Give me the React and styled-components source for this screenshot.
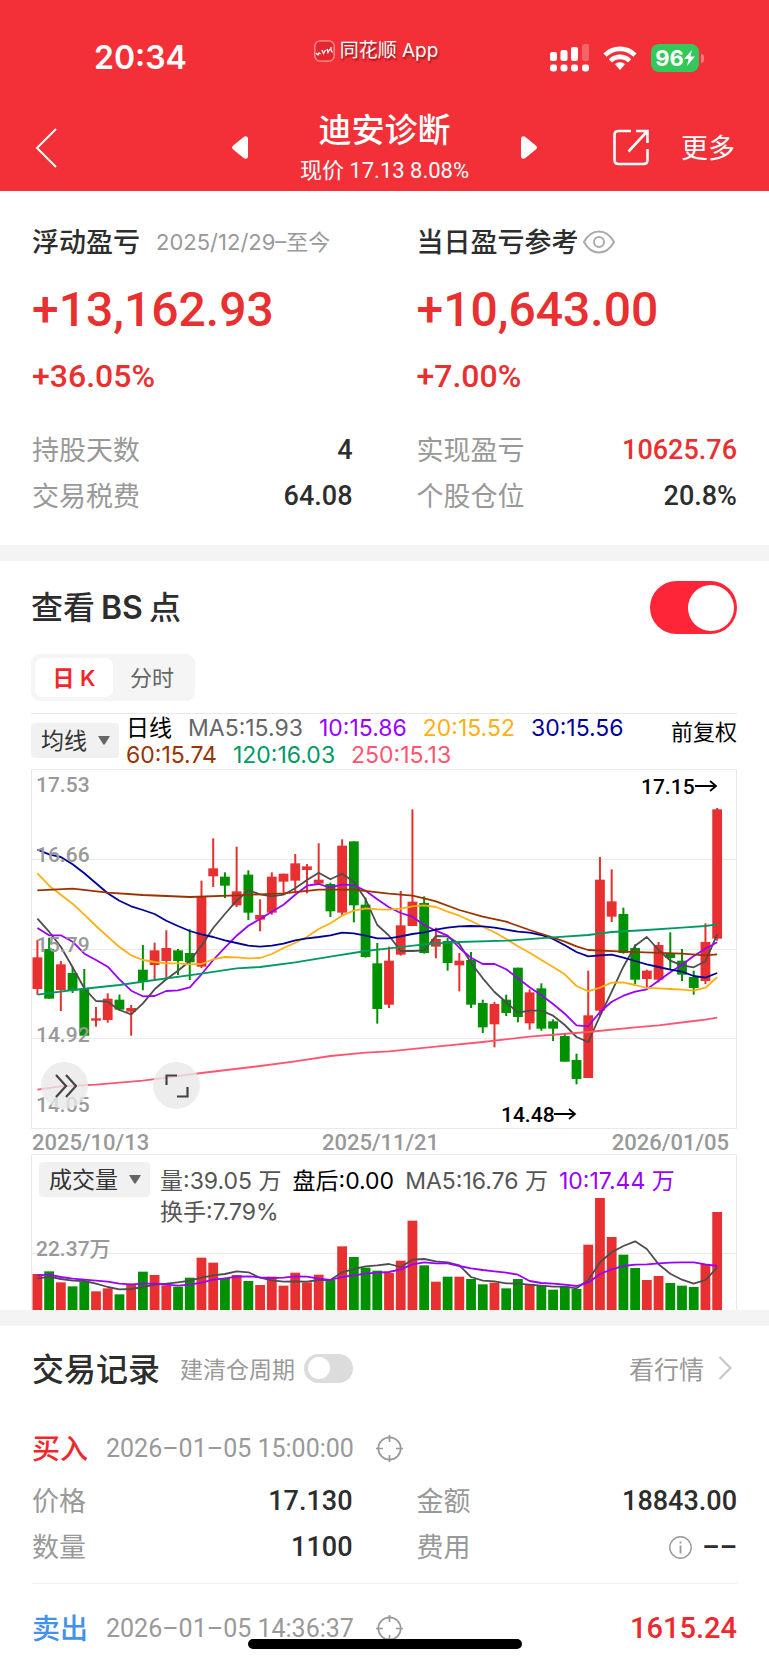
import React, { useState } from "react";
import styled, { createGlobalStyle, css } from "styled-components";

const GlobalStyle = createGlobalStyle`
  *, *::before, *::after { box-sizing: border-box; }
  body {
    margin: 0;
    background: #fff;
    color: #2d2d2d;
    font-family: Inter, "Noto Sans CJK SC", sans-serif;
    -webkit-font-smoothing: antialiased;
  }
  button, select, input { font: inherit; color: inherit; margin: 0; }
  h1, h2, p, dl, dd, dt { margin: 0; font-weight: inherit; font-size: inherit; }
  svg { display: block; flex: none; }
`;

const RED = "#e93030";
const GREEN = "#009100";
const GRAY = "#999";
const digits = css`
  font-family: Roboto, "Noto Sans CJK SC", sans-serif;
`;

const Page = styled.main`
  position: relative;
  min-height: 100vh;
  overflow: hidden;
`;

/* ---------- header ---------- */
const Header = styled.header`
  background: #f33038;
  color: #fff;
`;
const StatusBar = styled.div`
  display: grid;
  grid-template-columns: 1fr auto 1fr;
  align-items: center;
  height: 112px;
  padding: 4px 65px 0 48px;
`;
const Clock = styled.span`
  padding-left: 46px;
  font-size: 32px;
  line-height: 40px;
  font-weight: 600;
`;
const Brand = styled.span`
  display: flex;
  align-items: center;
  gap: 5px;
  padding-bottom: 14px;
  font-size: 19px;
  line-height: 24px;
  text-shadow: 1px 2px 2px rgba(80, 0, 0, 0.6);
`;
const StatusIcons = styled.span`
  display: flex;
  align-items: center;
  justify-content: flex-end;
  gap: 14px;
`;
const Battery = styled.span`
  display: flex;
  align-items: center;
  gap: 2px;
`;
const BatteryBody = styled.span`
  display: flex;
  align-items: center;
  justify-content: center;
  width: 48px;
  height: 28px;
  border-radius: 8px;
  background: #34c759;
  font-size: 22px;
  font-weight: 700;
`;
const BatteryTip = styled.span`
  width: 3px;
  height: 9px;
  border-radius: 0 3px 3px 0;
  background: #f8777c;
`;
const NavBar = styled.nav`
  display: grid;
  grid-template-columns: 1fr auto 1fr;
  align-items: center;
  height: 79px;
  padding: 0 34px 8px;
`;
const IconButton = styled.button`
  display: flex;
  align-items: center;
  padding: 0;
  border: 0;
  background: none;
`;
const StockSwitcher = styled.div`
  display: grid;
  grid-template-columns: 16px 273px 16px;
  align-items: center;
`;
const StockTitle = styled.div`
  height: 70px;
  text-align: center;
`;
const StockName = styled.h1`
  font-size: 33px;
  line-height: 34px;
  font-weight: 500;
`;
const StockPrice = styled.p`
  ${digits}
  margin-top: 7px;
  font-size: 22px;
  line-height: 34px;
`;
const NavActions = styled.div`
  display: flex;
  align-items: center;
  justify-content: flex-end;
  gap: 32px;
`;
const MoreButton = styled(IconButton)`
  padding-top: 2px;
  font-size: 27px;
  line-height: 32px;
`;

/* ---------- profit summary ---------- */
const Columns = styled.div`
  display: grid;
  grid-template-columns: 1fr 1fr;
  column-gap: 64px;
`;
const Summary = styled(Columns).attrs({ as: "section" })`
  padding: 31px 32px 27px;
`;
const SummaryHead = styled.div`
  display: flex;
  align-items: center;
  height: 40px;
`;
const SummaryTitle = styled.h2`
  padding-bottom: 4px;
  font-size: 27px;
  font-weight: 500;
`;
const Period = styled.span`
  margin-left: 16px;
  padding-bottom: 4px;
  font-size: 22px;
  color: ${GRAY};
`;
const EyeButton = styled(IconButton)`
  margin-left: 4px;
  color: #aaa;
`;
const Amount = styled.p`
  ${digits}
  margin-top: 18px;
  font-size: 48px;
  line-height: 60px;
  font-weight: 500;
  color: ${RED};
`;
const Percent = styled(Amount)`
  margin: 15px 0 29px;
  font-size: 32px;
  line-height: 42px;
`;
const Row = styled.dl`
  display: flex;
  align-items: center;
  justify-content: space-between;
  height: 46px;
  font-size: 27px;
`;
const RowLabel = styled.dt`
  padding-bottom: 2px;
  color: ${GRAY};
`;
const RowValue = styled.dd`
  ${digits}
  display: flex;
  align-items: center;
  gap: 10px;
  padding-top: 2px;
  font-weight: 500;
  color: ${(p) => (p.$tone === "up" ? RED : "#2d2d2d")};
`;
const Band = styled.div`
  height: 16px;
  background: #f4f4f4;
`;

/* ---------- chart section ---------- */
const ChartSection = styled.section`
  padding: 20px 32px 0 31px;
`;
const SectionHead = styled.div`
  display: flex;
  align-items: center;
  justify-content: space-between;
`;
const SectionTitle = styled.label`
  font-size: 32px;
  line-height: 44px;
  font-weight: 500;
`;
const Latin = styled.span`
  margin: 0 6px;
  font-weight: 600;
`;
const Switch = styled.input.attrs({ type: "checkbox", role: "switch" })`
  appearance: none;
  flex: none;
  display: flex;
  align-items: center;
  width: ${(p) => (p.$small ? 49 : 87)}px;
  height: ${(p) => (p.$small ? 29 : 53)}px;
  padding: 0 ${(p) => (p.$small ? 4 : 3)}px;
  border-radius: 27px;
  background: #dcdcdc;
  &::before {
    content: "";
    width: ${(p) => (p.$small ? 22 : 46)}px;
    height: ${(p) => (p.$small ? 22 : 46)}px;
    border-radius: 50%;
    background: #fff;
  }
  &:checked {
    justify-content: flex-end;
    background: #ff2538;
  }
`;
const Tabs = styled.div`
  display: inline-flex;
  margin: 20px 0 12px;
  padding: 4px;
  border-radius: 9px;
  background: #f5f5f5;
`;
const Tab = styled.button`
  width: 78px;
  height: 39px;
  padding: 0 0 4px;
  border: 0;
  border-radius: 7px;
  font-size: 22px;
  background: ${(p) => (p.$active ? "#fff" : "none")};
  color: ${(p) => (p.$active ? "#f0282d" : "#666")};
  font-weight: ${(p) => (p.$active ? 600 : 400)};
`;
const Legend = styled.div`
  display: flex;
  align-items: flex-start;
  gap: 7px;
  height: 56px;
  border-top: 1px solid #e8e8e8;
`;
const Picker = styled.div`
  position: relative;
  flex: none;
  margin-top: ${(p) => (p.$flush ? 0 : 9)}px;
  svg {
    position: absolute;
    right: 9px;
    top: 13px;
    pointer-events: none;
  }
`;
const PickerSelect = styled.select`
  appearance: none;
  display: block;
  width: ${(p) => p.$width}px;
  height: 35px;
  padding: 0 0 0 10px;
  border: 0;
  border-radius: 4px;
  background: #f1f1f1;
  font-size: 23px;
  color: #333;
`;
const LegendItems = styled.div`
  display: flex;
  flex: 1;
  flex-wrap: wrap;
  column-gap: ${(p) => (p.$roomy ? 11 : 16)}px;
  padding-top: ${(p) => (p.$roomy ? 4 : 1)}px;
  font-size: 23px;
  line-height: ${(p) => (p.$roomy ? 31 : 27)}px;
`;
const LegendItem = styled.span`
  color: ${(p) => p.$color};
  white-space: nowrap;
`;
const Adjust = styled(IconButton)`
  flex: none;
  margin-top: 5px;
  font-size: 22px;
  line-height: 27px;
  color: #000;
`;
const ChartBox = styled.div`
  position: relative;
`;
const Plot = styled.svg`
  width: 100%;
  height: auto;
`;
const AxisText = styled.text`
  ${digits}
  font-size: 21px;
  fill: ${(p) => (p.$strong ? "#000" : GRAY)};
  font-weight: 500;
`;
const FloatButtons = styled.div`
  position: absolute;
  left: 10px;
  bottom: 20px;
  display: flex;
  gap: 65px;
`;
const RoundButton = styled.button`
  display: flex;
  align-items: center;
  justify-content: center;
  width: 47px;
  height: 47px;
  padding: 0;
  border: 0;
  border-radius: 50%;
  background: rgba(232, 232, 232, 0.8);
  color: #444;
`;
const Dates = styled.div`
  ${digits}
  display: flex;
  justify-content: space-between;
  padding: 3px 8px 0 1px;
  font-size: 22px;
  line-height: 22px;
  color: ${GRAY};
  font-weight: 500;
`;
const VolumeLegend = styled.div`
  position: absolute;
  inset: 8px 8px auto;
  display: flex;
  align-items: flex-start;
  gap: 10px;
`;

/* ---------- trade records ---------- */
const Records = styled.section`
  padding: 20px 32px 0;
`;
const RecordsHead = styled.div`
  display: flex;
  align-items: center;
  height: 44px;
  margin-bottom: 14px;
`;
const RecordsTitle = styled.h2`
  padding-bottom: 2px;
  font-size: 32px;
  font-weight: 500;
`;
const CycleLabel = styled.label`
  display: flex;
  align-items: center;
  gap: 9px;
  margin-left: 20px;
  font-size: 23px;
  color: ${GRAY};
`;
const QuoteLink = styled.a`
  display: flex;
  align-items: center;
  gap: 14px;
  margin-left: auto;
  padding-right: 5px;
  font-size: 25px;
  color: ${GRAY};
  text-decoration: none;
`;
const Record = styled.article`
  padding: 24px 0 14px;
  & + & {
    border-top: 1px solid #f0f0f0;
  }
`;
const RecordHead = styled.div`
  display: flex;
  align-items: center;
  height: 40px;
`;
const Side = styled.span`
  padding-bottom: 2px;
  font-size: 28px;
  font-weight: 500;
  color: ${(p) => (p.$side === "buy" ? "#f0282d" : "#4390ef")};
`;
const RecordTime = styled.time`
  ${digits}
  margin: 0 22px 0 18px;
  font-size: 25px;
  color: ${GRAY};
`;
const RecordProfit = styled.span`
  ${digits}
  margin-left: auto;
  font-size: 29px;
  font-weight: 500;
  color: #f0282d;
`;
const RecordRows = styled(Columns)`
  margin-top: 9px;
`;
const HomeIndicator = styled.div`
  position: absolute;
  left: 50%;
  bottom: 16px;
  width: 274px;
  height: 10px;
  margin-left: -137px;
  border-radius: 5px;
  background: #000;
`;

/* ---------- chart data ---------- */
// Each candle: direction, body top, body bottom, high, low (thirds of a plot unit).
const CANDLES = [
  ["R", 562, 657, 510, 674], ["G", 537, 686, 503, 686], ["R", 583, 660, 573, 723],
  ["G", 609, 662, 592, 669], ["G", 656, 797, 597, 797], ["R", 745, 752, 711, 770],
  ["R", 686, 750, 670, 758], ["G", 689, 719, 674, 722], ["R", 714, 725, 705, 797],
  ["G", 599, 636, 525, 661], ["R", 541, 585, 518, 630], ["R", 534, 573, 481, 624],
  ["G", 541, 573, 537, 615], ["G", 549, 577, 478, 630], ["R", 380, 590, 332, 594],
  ["R", 295, 319, 205, 351], ["G", 320, 347, 307, 384], ["R", 364, 406, 230, 411],
  ["G", 314, 428, 301, 450], ["R", 435, 449, 388, 484], ["R", 320, 428, 307, 434],
  ["R", 311, 335, 311, 368], ["R", 280, 332, 252, 368], ["R", 289, 300, 282, 370],
  ["R", 329, 341, 220, 342], ["G", 342, 424, 338, 441], ["R", 227, 428, 208, 436],
  ["G", 214, 406, 214, 457], ["G", 404, 561, 383, 563], ["G", 580, 717, 519, 761],
  ["R", 572, 704, 530, 714], ["R", 466, 554, 363, 557], ["R", 395, 468, 118, 468],
  ["G", 399, 549, 379, 551], ["R", 507, 530, 473, 565], ["G", 513, 579, 503, 602],
  ["R", 572, 586, 549, 664], ["G", 570, 704, 546, 714], ["G", 699, 772, 689, 789],
  ["R", 702, 763, 696, 832], ["G", 689, 729, 674, 738], ["G", 593, 741, 593, 757],
  ["R", 667, 760, 658, 779], ["G", 655, 776, 640, 782], ["G", 754, 776, 748, 813],
  ["G", 798, 875, 790, 875], ["G", 870, 927, 851, 943], ["R", 736, 924, 602, 924],
  ["R", 329, 722, 261, 739], ["R", 394, 440, 298, 456], ["G", 432, 549, 413, 551],
  ["G", 534, 629, 523, 643], ["R", 602, 627, 599, 657], ["R", 525, 629, 516, 637],
  ["G", 549, 564, 487, 600], ["G", 572, 614, 537, 633], ["G", 621, 654, 602, 674],
  ["R", 516, 633, 460, 642], ["R", 118, 506, 114, 512],
];
const VOLUMES = [
  432, 424, 457, 469, 455, 484, 475, 493, 463, 425, 435, 466, 470, 443, 383, 398, 444, 435, 453, 465,
  440, 467, 428, 457, 434, 450, 349, 381, 413, 422, 429, 392, 272, 406, 455, 440, 440, 447, 463, 458,
  475, 447, 463, 467, 479, 470, 477, 344, 204, 321, 374, 414, 450, 438, 459, 467, 471, 402, 246,
];
const daily = (values) => values.map((v, i) => [i, v]);
const PRICE_LINES = [
  { color: "#4d4d4d", points: daily([446, 485, 530, 592, 655, 693, 695, 720, 733, 700, 658, 628, 602, 573, 527, 474, 432, 392, 361, 373, 379, 374, 355, 330, 308, 328, 311, 335, 388, 465, 497, 543, 543, 541, 498, 499, 522, 578, 625, 666, 697, 728, 722, 722, 737, 765, 801, 816, 738, 665, 590, 527, 501, 540, 572, 586, 592, 574, 493]) },
  { color: "#9900ff", points: daily([474, 496, 496, 515, 551, 570, 590, 628, 662, 679, 678, 663, 661, 652, 613, 570, 533, 497, 467, 447, 425, 404, 374, 347, 342, 353, 343, 346, 362, 388, 412, 429, 440, 465, 482, 497, 533, 563, 582, 582, 598, 625, 652, 676, 702, 731, 766, 769, 726, 695, 677, 665, 658, 632, 607, 584, 558, 536, 517]) },
  { color: "#ffb011", points: daily([310, 347, 374, 401, 434, 468, 500, 531, 556, 570, 576, 580, 580, 583, 582, 568, 561, 562, 565, 564, 552, 534, 518, 500, 477, 460, 437, 422, 415, 418, 419, 416, 409, 406, 411, 425, 437, 453, 470, 487, 507, 529, 548, 570, 591, 613, 648, 664, 653, 638, 637, 645, 654, 655, 657, 659, 662, 653, 622]) },
  { color: "#000099", points: daily([239, 253, 261, 283, 310, 340, 370, 392, 409, 420, 432, 452, 468, 483, 493, 501, 511, 519, 527, 530, 527, 521, 511, 505, 501, 496, 488, 490, 497, 505, 505, 499, 492, 487, 479, 473, 469, 468, 469, 473, 479, 485, 488, 495, 507, 526, 546, 559, 556, 554, 563, 573, 583, 591, 599, 605, 618, 623, 609]) },
  { color: "#993300", points: [[0, 361], [3, 356], [6, 368], [9, 375], [13, 381], [17, 376], [21, 370], [24, 359], [27, 359], [30, 371], [32, 377], [33, 385], [34, 394], [36, 420], [38, 440], [40, 455], [42, 480], [44, 503], [45, 515], [46, 529], [47, 540], [50, 545], [55, 551], [57, 556], [58, 553]] },
  { color: "#009966", points: [[0, 674], [3, 660], [7, 645], [10, 630], [14, 611], [17, 595], [19, 591], [22, 577], [25, 560], [28, 543], [30, 535], [33, 523], [36, 516], [40, 512], [44, 502], [47, 495], [49, 486], [52, 480], [55, 473], [57, 468], [58, 463]] },
  { color: "#ff5571", points: [[0, 959], [2, 949], [5, 944], [9, 932], [14, 909], [19, 888], [22, 874], [25, 858], [28, 848], [30, 844], [34, 830], [38, 816], [42, 800], [47, 786], [51, 772], [53, 766], [56, 753], [57, 749], [58, 743]] },
];
const VOLUME_LINES = [
  { color: "#4d4d4d", points: daily([446, 440, 447, 452, 453, 461, 471, 478, 477, 471, 464, 461, 457, 452, 443, 436, 432, 424, 427, 443, 451, 455, 454, 455, 450, 450, 427, 417, 409, 406, 402, 411, 389, 387, 394, 397, 406, 441, 452, 454, 460, 461, 464, 467, 470, 470, 475, 451, 397, 367, 348, 334, 357, 403, 431, 449, 461, 450, 413]) },
  { color: "#9900ff", points: daily([436, 434, 441, 446, 449, 452, 455, 461, 463, 461, 461, 464, 467, 464, 458, 449, 445, 440, 439, 442, 444, 443, 439, 440, 446, 450, 441, 436, 431, 428, 426, 418, 403, 397, 400, 400, 408, 415, 420, 424, 428, 434, 453, 459, 461, 464, 468, 458, 432, 418, 408, 404, 403, 400, 398, 397, 397, 403, 408]) },
];

const STEP = 11.72;
const dayX = (i) => 6.4 + i * STEP;
const priceY = (v) => v / 3 + 1;
const volumeY = (v) => (v - 72) / 3;
const barColor = (dir) => (dir === "R" ? RED : GREEN);

function Lines({ lines, toY }) {
  return lines.map((line) => (
    <polyline
      key={line.color}
      points={line.points.map(([i, v]) => `${dayX(i).toFixed(1)},${toY(v).toFixed(1)}`).join(" ")}
      fill="none"
      stroke={line.color}
      strokeWidth="1.8"
      strokeLinejoin="round"
    />
  ));
}

function Arrow({ x, y }) {
  return <path d={`M${x} ${y}h21M${x + 15} ${y - 5}l6 5l-6 5`} fill="none" stroke="#000" strokeWidth="1.8" />;
}

function PriceChart() {
  return (
    <Plot viewBox="0 0 706 360" role="img" aria-label="日K线图">
      <path d="M.5 .5H705.5V359.5H.5ZM0 90.5H705M0 180.5H705M0 269.5H705" fill="none" stroke="#e9e9e9" />
      {CANDLES.map(([dir, top, bottom, high, low], i) => (
        <g key={i} fill={barColor(dir)}>
          <rect x={dayX(i) - 1} y={priceY(high)} width="2" height={(low - high) / 3} />
          <rect x={dayX(i) - 4.9} y={priceY(top)} width="9.8" height={(bottom - top) / 3} />
        </g>
      ))}
      <Lines lines={PRICE_LINES} toY={priceY} />
      <AxisText x="5" y="23">17.53</AxisText>
      <AxisText x="5" y="93">16.66</AxisText>
      <AxisText x="5" y="183">15.79</AxisText>
      <AxisText x="5" y="273">14.92</AxisText>
      <AxisText x="5" y="343">14.05</AxisText>
      <AxisText x="610" y="25" $strong>17.15</AxisText>
      <Arrow x={664} y={17} />
      <AxisText x="470" y="353" $strong>14.48</AxisText>
      <Arrow x={523} y={345} />
    </Plot>
  );
}

function VolumeChart() {
  return (
    <Plot viewBox="0 0 706 156" role="img" aria-label="成交量图">
      <path d="M.5 156V.5H705.5V156M0 99.5H705" fill="none" stroke="#e9e9e9" />
      {VOLUMES.map((v, i) => (
        <rect key={i} x={dayX(i) - 4.9} y={volumeY(v)} width="9.8" height={156 - volumeY(v)} fill={barColor(CANDLES[i][0])} />
      ))}
      <Lines lines={VOLUME_LINES} toY={volumeY} />
      <AxisText x="5" y="102">22.37万</AxisText>
    </Plot>
  );
}

/* ---------- icons ---------- */
const Signal = () => (
  <svg width="39" height="28" viewBox="0 0 39 28" fill="#fff">
    <rect x="0" y="8" width="7" height="9" rx="2" />
    <rect x="10.5" y="6" width="7" height="11" rx="2" />
    <rect x="21" y="3" width="7" height="14" rx="2" />
    <rect x="32" y="0" width="7" height="17" rx="2" opacity=".25" />
    {[0, 10.5, 21, 32].map((x) => <rect key={x} x={x} y="20.5" width="7" height="7" rx="2.4" />)}
  </svg>
);
const Wifi = () => (
  <svg width="34" height="25" viewBox="0 0 34 25" fill="none" stroke="#fff" strokeWidth="4.6">
    <path d="M2 9.2C10 .8 24 .8 32 9.2M7.4 14.8C12.8 9.6 21.2 9.6 26.6 14.8" />
    <path d="M17 16.2c-2.4 0-4 .9-5 2L17 24l5-5.800c-1-1.100-2.600-2-5-2Z" fill="#fff" stroke="none" />
  </svg>
);
const Bolt = () => (
  <svg width="11" height="16" viewBox="0 0 11 16" fill="#fff"><path d="M8 0 0 9h4.600L3 16l8-9.500H6.400Z" /></svg>
);
const BrandMark = () => (
  <svg width="21" height="22" viewBox="0 0 21 22" fill="none">
    <rect x=".8" y=".8" width="19.400" height="20.400" rx="5.500" fill="#e5262e" stroke="#f79a9e" strokeWidth="1.300" />
    <path d="M2 13l2 2 1-2 1.500 1M8 10l1.500 3.500L11.500 10M13 9l1 3.500L16 9M17 7v3l1.500 2.500" stroke="#fff" strokeWidth="1.300" />
  </svg>
);
const BackIcon = () => (
  <svg width="24" height="40" viewBox="0 0 24 40" fill="none" stroke="#fff" strokeWidth="2"><path d="M22 1 3 20l19 19" /></svg>
);
const TriangleLeft = () => (
  <svg width="16" height="23" viewBox="0 0 16 23" fill="#fff"><path d="M1.200 9.500 11 1.400C13.500-.600 16 0 16 3v17c0 3-2.500 3.600-5 1.600L1.200 13.500c-1.600-1.300-1.600-2.700 0-4Z" /></svg>
);
const TriangleRight = () => (
  <svg width="16" height="23" viewBox="0 0 16 23" fill="#fff"><path d="M14.800 9.500 5 1.400C2.500-.600 0 0 0 3v17c0 3 2.500 3.600 5 1.600l9.800-8.100c1.600-1.300 1.600-2.700 0-4Z" /></svg>
);
const ShareIcon = () => (
  <svg width="36" height="37" viewBox="0 0 36 37" fill="none" stroke="#fff" strokeWidth="2.600">
    <path d="M18 2H5.500Q1.500 2 1.500 6v25q0 4 4 4h25q4 0 4-4V20M23 2h11.500v12M34 2.500 15.500 22.500" />
  </svg>
);
const EyeIcon = () => (
  <svg width="32" height="24" viewBox="0 0 32 24" fill="none" stroke="currentColor" strokeWidth="2">
    <path d="M1 12C5 4.500 10 1.500 16 1.500S27 4.500 31 12c-4 7.500-9 10.500-15 10.500S5 19.500 1 12Z" />
    <circle cx="16" cy="12" r="5" />
  </svg>
);
const Caret = () => (
  <svg width="12" height="9" viewBox="0 0 12 9" fill="#666"><path d="M0 0h12L6.800 8.300Q6 9.200 5.200 8.300Z" /></svg>
);
const DoubleChevron = () => (
  <svg width="24" height="24" viewBox="0 0 24 24" fill="none" stroke="currentColor" strokeWidth="2.200"><path d="M3 1l10 11L3 23M13 1l10 11-10 11" /></svg>
);
const ExpandIcon = () => (
  <svg width="24" height="24" viewBox="0 0 24 24" fill="none" stroke="currentColor" strokeWidth="2.200"><path d="M1.500 11V1.500H12M22.500 13v9.500H12" /></svg>
);
const ChevronRight = () => (
  <svg width="14" height="24" viewBox="0 0 14 24" fill="none" stroke="#c4c4c4" strokeWidth="2"><path d="M1.500 1 12.500 12l-11 11" /></svg>
);
const TargetIcon = () => (
  <svg width="27" height="27" viewBox="0 0 27 27" fill="none" stroke={GRAY} strokeWidth="1.700">
    <circle cx="13.500" cy="13.500" r="11.200" />
    <path d="M13.500 0v7M13.500 20v7M0 13.500h7M20 13.500h7" />
  </svg>
);
const InfoIcon = () => (
  <svg width="23" height="23" viewBox="0 0 23 23" fill="none" stroke={GRAY} strokeWidth="1.400">
    <circle cx="11.500" cy="11.500" r="10.700" />
    <path d="M11.500 9.500v8M11.500 5.500v2" strokeWidth="1.800" />
  </svg>
);

/* ---------- composed pieces ---------- */
function Stat({ label, children, tone }) {
  return (
    <Row>
      <RowLabel>{label}</RowLabel>
      <RowValue $tone={tone}>{children}</RowValue>
    </Row>
  );
}

function LegendList({ items, roomy }) {
  return (
    <LegendItems $roomy={roomy}>
      {items.map(([text, color]) => <LegendItem key={text} $color={color}>{text}</LegendItem>)}
    </LegendItems>
  );
}

const PRICE_LEGEND = [
  ["日线", "#000"], ["MA5:15.93", "#666"], ["10:15.86", "#9900ff"], ["20:15.52", "#ffb011"],
  ["30:15.56", "#000099"], ["60:15.74", "#993300"], ["120:16.03", "#009966"], ["250:15.13", "#ff5571"],
];
const VOLUME_LEGEND = [
  ["量:39.05 万", "#555"], ["盘后:0.00", "#000"], ["MA5:16.76 万", "#555"], ["10:17.44 万", "#9900ff"], ["换手:7.79%", "#555"],
];

export default function App() {
  const [tab, setTab] = useState("day");
  return (
    <>
      <GlobalStyle />
      <Page>
        <Header>
          <StatusBar>
            <Clock>20:34</Clock>
            <Brand><BrandMark />同花顺 App</Brand>
            <StatusIcons>
              <Signal />
              <Wifi />
              <Battery>
                <BatteryBody>96<Bolt /></BatteryBody>
                <BatteryTip />
              </Battery>
            </StatusIcons>
          </StatusBar>
          <NavBar>
            <IconButton aria-label="返回"><BackIcon /></IconButton>
            <StockSwitcher>
              <IconButton aria-label="上一只"><TriangleLeft /></IconButton>
              <StockTitle>
                <StockName>迪安诊断</StockName>
                <StockPrice>现价 17.13 8.08%</StockPrice>
              </StockTitle>
              <IconButton aria-label="下一只"><TriangleRight /></IconButton>
            </StockSwitcher>
            <NavActions>
              <IconButton aria-label="分享"><ShareIcon /></IconButton>
              <MoreButton>更多</MoreButton>
            </NavActions>
          </NavBar>
        </Header>

        <Summary>
          <div>
            <SummaryHead>
              <SummaryTitle>浮动盈亏</SummaryTitle>
              <Period>2025/12/29–至今</Period>
            </SummaryHead>
            <Amount>+13,162.93</Amount>
            <Percent>+36.05%</Percent>
            <Stat label="持股天数">4</Stat>
            <Stat label="交易税费">64.08</Stat>
          </div>
          <div>
            <SummaryHead>
              <SummaryTitle>当日盈亏参考</SummaryTitle>
              <EyeButton aria-label="显示或隐藏金额"><EyeIcon /></EyeButton>
            </SummaryHead>
            <Amount>+10,643.00</Amount>
            <Percent>+7.00%</Percent>
            <Stat label="实现盈亏" tone="up">10625.76</Stat>
            <Stat label="个股仓位">20.8%</Stat>
          </div>
        </Summary>
        <Band />

        <ChartSection>
          <SectionHead>
            <SectionTitle htmlFor="bs">查看<Latin>BS</Latin>点</SectionTitle>
            <Switch id="bs" defaultChecked />
          </SectionHead>
          <Tabs>
            <Tab $active={tab === "day"} onClick={() => setTab("day")}>日 K</Tab>
            <Tab $active={tab === "time"} onClick={() => setTab("time")}>分时</Tab>
          </Tabs>
          <Legend>
            <Picker>
              <PickerSelect $width={88} aria-label="主图指标"><option>均线</option></PickerSelect>
              <Caret />
            </Picker>
            <LegendList items={PRICE_LEGEND} />
            <Adjust>前复权</Adjust>
          </Legend>
          <ChartBox>
            <PriceChart />
            <FloatButtons>
              <RoundButton aria-label="快进"><DoubleChevron /></RoundButton>
              <RoundButton aria-label="全屏"><ExpandIcon /></RoundButton>
            </FloatButtons>
          </ChartBox>
          <Dates>
            <span>2025/10/13</span>
            <span>2025/11/21</span>
            <span>2026/01/05</span>
          </Dates>
          <ChartBox>
            <VolumeChart />
            <VolumeLegend>
              <Picker $flush>
                <PickerSelect $width={111} aria-label="副图指标"><option>成交量</option></PickerSelect>
                <Caret />
              </Picker>
              <LegendList items={VOLUME_LEGEND} roomy />
            </VolumeLegend>
          </ChartBox>
        </ChartSection>
        <Band />

        <Records>
          <RecordsHead>
            <RecordsTitle>交易记录</RecordsTitle>
            <CycleLabel>建清仓周期<Switch $small /></CycleLabel>
            <QuoteLink href="#quote">看行情<ChevronRight /></QuoteLink>
          </RecordsHead>
          <Record>
            <RecordHead>
              <Side $side="buy">买入</Side>
              <RecordTime>2026–01–05 15:00:00</RecordTime>
              <IconButton aria-label="定位"><TargetIcon /></IconButton>
            </RecordHead>
            <RecordRows>
              <Stat label="价格">17.130</Stat>
              <Stat label="金额">18843.00</Stat>
              <Stat label="数量">1100</Stat>
              <Stat label="费用"><InfoIcon />––</Stat>
            </RecordRows>
          </Record>
          <Record>
            <RecordHead>
              <Side $side="sell">卖出</Side>
              <RecordTime>2026–01–05 14:36:37</RecordTime>
              <IconButton aria-label="定位"><TargetIcon /></IconButton>
              <RecordProfit>1615.24</RecordProfit>
            </RecordHead>
          </Record>
        </Records>
        <HomeIndicator />
      </Page>
    </>
  );
}
